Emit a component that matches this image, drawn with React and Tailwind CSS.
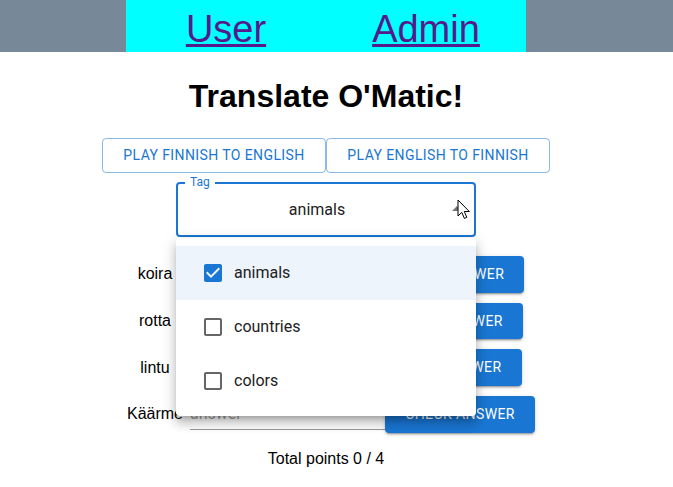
import React from "react";

const words = ["koira", "rotta", "lintu", "Käärme"];
const tags = [
  { name: "animals", checked: true },
  { name: "countries", checked: false },
  { name: "colors", checked: false },
];

const CheckBox = ({ checked }) =>
  checked ? (
    <svg width="24" height="24" viewBox="0 0 24 24">
      <path
        fill="#1976d2"
        d="M19 3H5c-1.11 0-2 .9-2 2v14c0 1.1.89 2 2 2h14c1.11 0 2-.9 2-2V5c0-1.1-.89-2-2-2zm-9 14l-5-5 1.41-1.41L10 14.17l7.59-7.59L19 8l-9 9z"
      />
    </svg>
  ) : (
    <svg width="24" height="24" viewBox="0 0 24 24">
      <path
        fill="rgba(0,0,0,0.6)"
        d="M19 5v14H5V5h14m0-2H5c-1.1 0-2 .9-2 2v14c0 1.1.9 2 2 2h14c1.1 0 2-.9 2-2V5c0-1.1-.9-2-2-2z"
      />
    </svg>
  );

const App = () => {
  return (
    <div className="min-h-[487px] bg-white font-['Liberation_Sans',Arial,sans-serif] text-black">
      {/* top nav */}
      <div className="h-[52px] bg-[#778899]">
        <div className="w-[652px] flex justify-center">
          <nav className="w-[400px] h-[52px] bg-[#00ffff] grid grid-cols-2 text-[38px] leading-[46px] pt-[6px]">
            <a href="#" className="text-center text-[#551a8b] underline">
              User
            </a>
            <a href="#" className="text-center text-[#551a8b] underline">
              Admin
            </a>
          </nav>
        </div>
      </div>

      <div className="w-[652px] flex flex-col items-center">
        <h1 className="mt-[26px] text-[32px] leading-[37px] font-bold">
          Translate O'Matic!
        </h1>

        <div className="mt-[23px] flex font-['Roboto',sans-serif] text-[14px] tracking-[0.4px] text-[#1976d2]">
          <button className="w-[224px] h-[35px] border border-[#1976d2]/50 rounded">
            PLAY FINNISH TO ENGLISH
          </button>
          <button className="w-[224px] h-[35px] border border-[#1976d2]/50 rounded">
            PLAY ENGLISH TO FINNISH
          </button>
        </div>

        {/* tag select */}
        <div className="relative mt-[9px] w-[300px] h-[55px] font-['Roboto',sans-serif]">
          <div className="absolute inset-0 border-2 border-[#1976d2] rounded" />
          <span className="absolute left-[9px] -top-[7px] px-[5px] bg-white text-[12px] leading-[14px] text-[#1976d2]">
            Tag
          </span>
          <div className="h-full pl-[14px] pr-[32px] flex items-center justify-center text-[16px] text-[#212121]">
            animals
          </div>
          <svg
            className="absolute right-[7px] top-[15px]"
            width="24"
            height="24"
            viewBox="0 0 24 24"
          >
            <path fill="rgba(0,0,0,0.54)" d="M7 14l5-5 5 5z" />
          </svg>
          <svg
            className="absolute left-[281px] top-[17px] z-20"
            width="14"
            height="21"
            viewBox="0 0 14 21"
          >
            <path
              d="M1 1 L1 17 L4.8 13.4 L7.4 19.4 L9.8 18.4 L7.3 12.5 L12.3 12.5 Z"
              fill="white"
              stroke="black"
              strokeWidth="1"
              strokeLinejoin="round"
            />
          </svg>

          {/* open menu */}
          <div className="absolute left-0 top-[56px] w-[300px] py-2 bg-white rounded z-10 shadow-[0px_5px_5px_-3px_rgba(0,0,0,0.2),0px_8px_10px_1px_rgba(0,0,0,0.14),0px_3px_14px_2px_rgba(0,0,0,0.12)]">
            {tags.map((t) => (
              <div
                key={t.name}
                className={
                  "h-[54px] pl-4 flex items-center text-[16px] text-[#212121] " +
                  (t.checked ? "bg-[#edf4fb]" : "")
                }
              >
                <div className="p-[9px]">
                  <CheckBox checked={t.checked} />
                </div>
                <span>{t.name}</span>
              </div>
            ))}
          </div>
        </div>

        {/* word rows */}
        <div className="mt-[14px] flex flex-col items-center pl-[10px]">
          {words.map((w) => (
            <div key={w} className="h-[46.7px] flex items-center">
              <span className="text-[16px] mr-[7px]">{w}</span>
              <div className="w-[195px] h-[32px] border-b border-black/40 flex items-center font-['Roboto',sans-serif] text-[16px] text-black/40">
                answer
              </div>
              <button className="w-[150px] h-[36.5px] bg-[#1976d2] text-white rounded font-['Roboto',sans-serif] text-[14px] tracking-[0.4px] shadow-[0px_3px_1px_-2px_rgba(0,0,0,0.2),0px_2px_2px_0px_rgba(0,0,0,0.14),0px_1px_5px_0px_rgba(0,0,0,0.12)]">
                CHECK ANSWER
              </button>
            </div>
          ))}
        </div>

        <p className="mt-[9px] text-[16px] leading-[24px]">Total points 0 / 4</p>
      </div>
    </div>
  );
};

export default App;
